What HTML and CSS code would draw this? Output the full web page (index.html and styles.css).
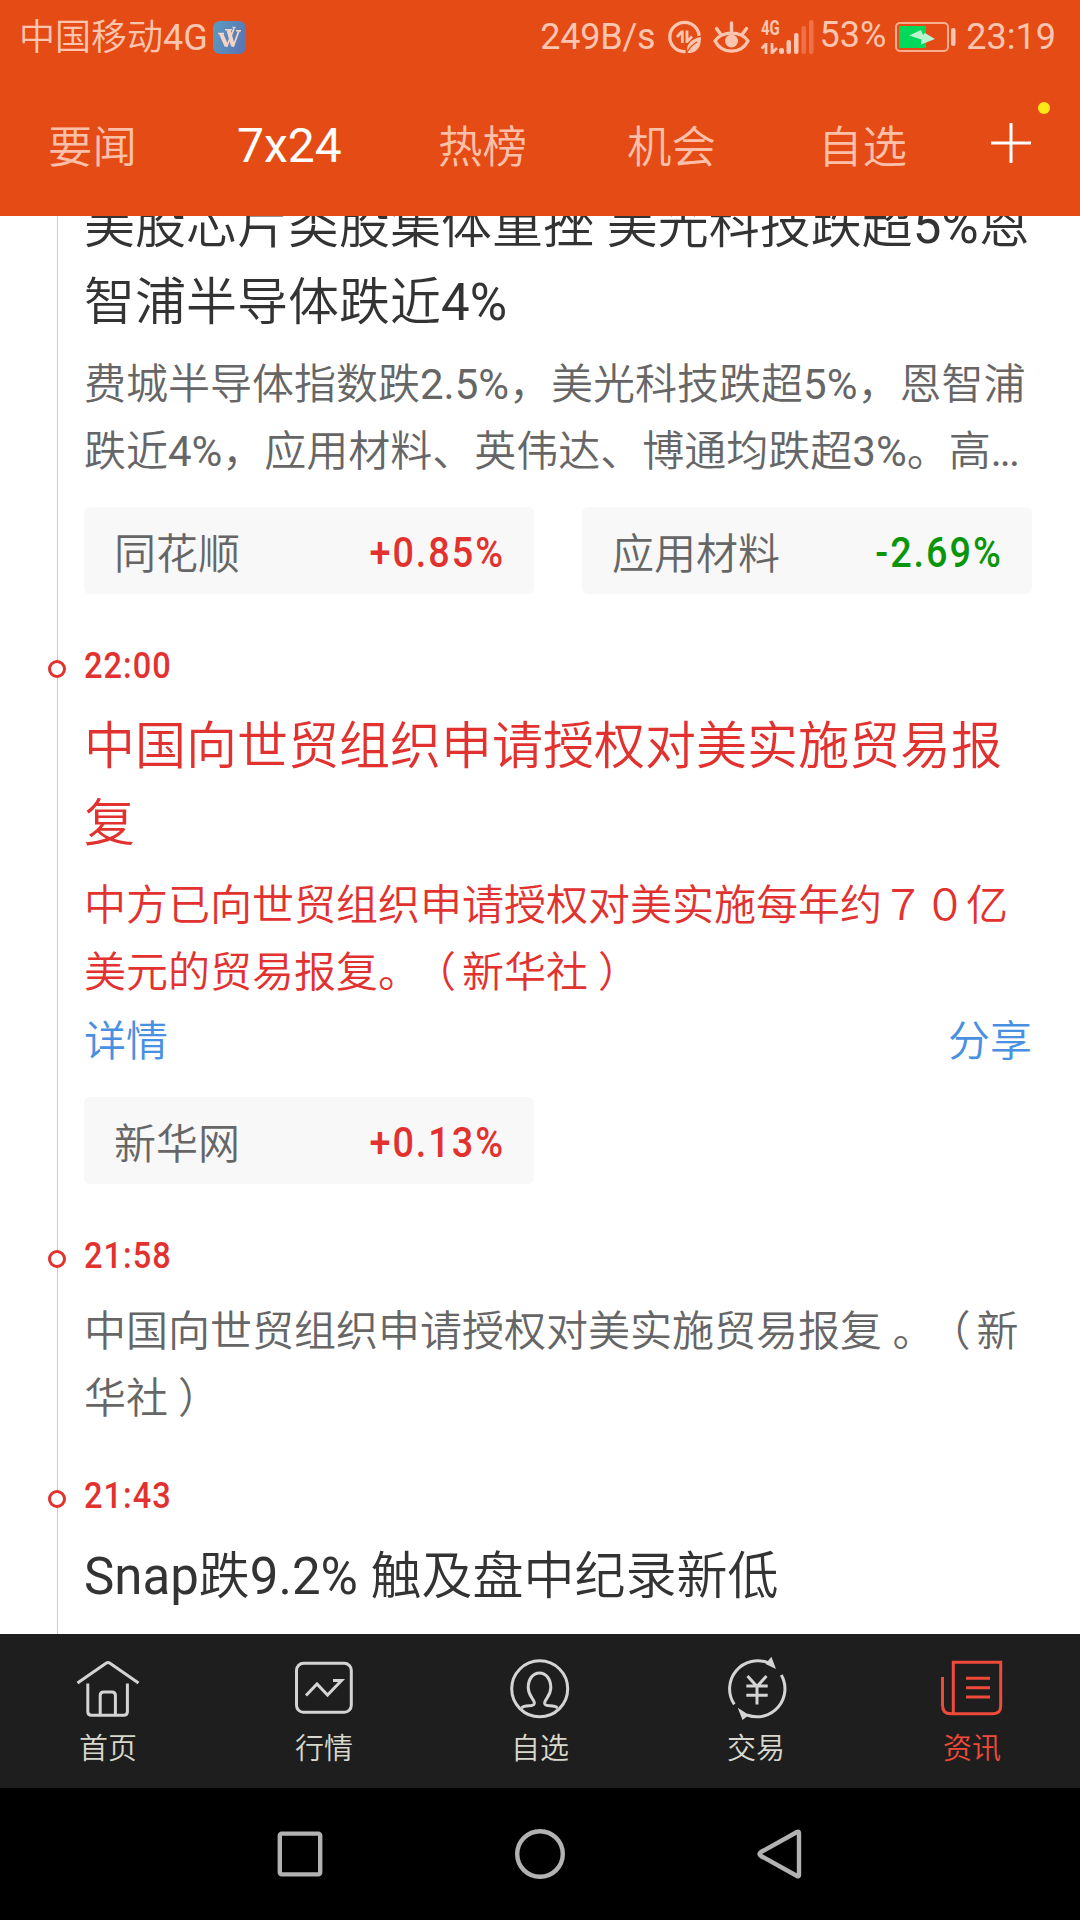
FILE: index.html
```html
<!DOCTYPE html>
<html lang="zh-CN">
<head>
<meta charset="utf-8">
<title>7x24</title>
<link rel="stylesheet" href="styles.css">
</head>
<body>
<div class="phone">
  <header class="header">
    <div class="status">
      <div class="status-left">
        <span class="carrier">中国移动4G</span>
        <svg class="app-badge" width="33" height="33" viewBox="0 0 33 33">
          <defs><linearGradient id="badge" x1="0" y1="0" x2="1" y2="0.3"><stop offset="0" stop-color="#5b9cc0"/><stop offset="1" stop-color="#5a78b4"/></linearGradient></defs>
          <rect width="33" height="33" rx="7" fill="url(#badge)"/>
          <g fill="none" stroke="#f4d3c8">
            <path d="M8 12.500L13.500 25M15.500 9L20 25" stroke-width="4"/>
            <path d="M13.500 26L21 7.500M20 26L26 9.500" stroke-width="1.800"/>
            <path d="M5 12.500h6M12 8.800h7M19.500 6.500h3M23 9.800h5" stroke-width="1.500"/>
          </g>
        </svg>
      </div>
      <div class="status-right">
        <span class="speed">249B/s</span>
        <svg class="ic-data" width="34" height="34" viewBox="0 0 34 34">
          <circle cx="16.500" cy="17" r="14.700" fill="none" stroke="#fcc5b0" stroke-width="3.300"/>
          <path d="M9 17l5-5.500M14.300 10.500V23M19 10.500V23M19 22l5-5.500" fill="none" stroke="#fcc5b0" stroke-width="2.800"/>
          <path d="M33.500 16c1 12-5 19-15 17.500C17 24 23 18 33.500 16z" fill="#fcc5b0" stroke="#e54b15" stroke-width="1.400"/>
          <path d="M18 34q4-8 11-12" fill="none" stroke="#e54b15" stroke-width="1.200"/>
        </svg>
        <svg class="ic-eye" width="37" height="34" viewBox="0 0 37 34">
          <path d="M2 21C9 10.500 28 10.500 35 21C28 34.500 9 34.500 2 21z" fill="none" stroke="#fcc5b0" stroke-width="3.200"/>
          <circle cx="18.500" cy="21" r="6.500" fill="#fcc5b0"/>
          <path d="M18.500 3v8M3.500 8.500l4 5.500M33.500 8.500l-4 5.500" stroke="#fcc5b0" stroke-width="3.400" stroke-linecap="round"/>
        </svg>
        <div class="signal">
          <span class="signal-type">4G</span>
          <svg width="54" height="34" viewBox="0 0 54 34">
            <g fill="#fcc5b0"><rect x="18" y="28" width="5" height="6" rx="2"/><rect x="25.500" y="20" width="4.500" height="14" rx="2"/><rect x="33" y="13" width="4.500" height="21" rx="2"/></g>
            <g fill="#ee7148"><rect x="40.500" y="6" width="4.500" height="28" rx="2"/><rect x="48" y="0" width="4.500" height="34" rx="2"/></g>
            <path d="M.5 28.500l4-4M5 23v11M11 23v11M11 33l5-5" fill="none" stroke="#fcc5b0" stroke-width="2.800"/>
          </svg>
        </div>
        <span class="percent">53%</span>
        <svg class="ic-battery" width="61" height="30" viewBox="0 0 61 30">
          <rect x="1" y="1" width="52" height="28" rx="4" fill="none" stroke="#fcae90" stroke-width="2"/>
          <rect x="4" y="4" width="27" height="22" fill="#00d959"/>
          <path d="M14 13.500L26 8l2 5 2-2 10 6-14 5.500.5-5z" fill="#b9f5d0"/>
          <rect x="56" y="6" width="4.500" height="18" rx="2" fill="#fcc5b0"/>
        </svg>
        <span class="clock">23:19</span>
      </div>
    </div>
    <nav class="tabs">
      <span class="tab">要闻</span>
      <span class="tab active">7x24</span>
      <span class="tab">热榜</span>
      <span class="tab">机会</span>
      <span class="tab">自选</span>
      <span class="add"><svg width="40" height="40" viewBox="0 0 40 40"><path d="M20 0v40M0 20h40" stroke="#fff" stroke-width="3"/></svg><i class="dot"></i></span>
    </nav>
  </header>

  <main class="feed">
    <article class="item first">
      <h2 class="title">美股芯片类股集体重挫 美光科技跌超5%恩<br>智浦半导体跌近4%</h2>
      <p class="text">费城半导体指数跌2.5%，美光科技跌超5%，恩智浦<br>跌近4%，应用材料、英伟达、博通均跌超3%。高<span class="more">...</span></p>
      <div class="chips">
        <div class="chip"><span>同花顺</span><b class="up">+0.85%</b></div>
        <div class="chip"><span>应用材料</span><b class="down">-2.69%</b></div>
      </div>
    </article>
    <article class="item red">
      <time class="time"><span>22:00</span></time>
      <h2 class="title">中国向世贸组织申请授权对美实施贸易报<br>复</h2>
      <p class="text">中方已向世贸组织申请授权对美实施每年约７０亿<br>美元的贸易报复。<span class="open">（</span>新华社<span class="close">）</span></p>
      <div class="links"><a>详情</a><a>分享</a></div>
      <div class="chips">
        <div class="chip"><span>新华网</span><b class="up">+0.13%</b></div>
      </div>
    </article>
    <article class="item">
      <time class="time"><span>21:58</span></time>
      <p class="text">中国向世贸组织申请授权对美实施贸易报复 。<span class="open">（</span>新<br>华社<span class="close">）</span></p>
    </article>
    <article class="item last">
      <time class="time"><span>21:43</span></time>
      <h2 class="title">Snap跌9.2% 触及盘中纪录新低</h2>
    </article>
  </main>

  <nav class="tabbar">
    <div class="tabbar-item">
      <svg width="72" height="72" viewBox="0 0 72 72"><path d="M5.500 31L34 11.200q2-1.200 4 0L66.500 31M15.800 31.500v28q0 3.800 3.800 3.800h32q3.800 0 3.800-3.800v-28M28.200 63V43.500q0-3.500 3.500-3.500h8.200q3.500 0 3.500 3.500V63"/></svg>
      <span>首页</span>
    </div>
    <div class="tabbar-item">
      <svg width="72" height="72" viewBox="0 0 72 72"><rect x="8.500" y="11.300" width="54.800" height="49" rx="7"/><path d="M18 43.500l11-11.500 10.500 11L53.500 28.500H45"/></svg>
      <span>行情</span>
    </div>
    <div class="tabbar-item">
      <svg width="72" height="72" viewBox="0 0 72 72"><circle cx="35.700" cy="36.800" r="28"/><path d="M17.500 56c4-4 12-.5 12.800-4.500C31 47 24.200 45 24.200 35.500c0-8 4.500-14.500 11.300-14.500s11.300 6.500 11.300 14.500C46.800 45 40 47 40.700 51.500c.8 4 8.800.5 12.800 4.500"/></svg>
      <span>自选</span>
    </div>
    <div class="tabbar-item">
      <svg width="72" height="72" viewBox="0 0 72 72"><path d="M14.300 52.300A28 28 0 0 1 49 11.200M61.300 23A28 28 0 0 1 27 63"/><path class="solid" d="M51.400 4.700L56 17l-10.500-5zM17.700 55.700L22.500 68l6.500-5z"/><path d="M27.500 24L37 34.500 46.500 24M37 34v18.500M26.300 34h21.400M26.300 43.300h21.400"/></svg>
      <span>交易</span>
    </div>
    <div class="tabbar-item current">
      <svg width="72" height="72" viewBox="0 0 72 72"><path d="M17.300 61.700V10.200h47.400V54q0 7.700-7.700 7.700H15q-8.500 0-8.500-8.500V25M30 26.300h24M30 35.700h24M30 45h24"/></svg>
      <span>资讯</span>
    </div>
  </nav>

  <div class="sysnav">
    <svg width="50" height="50" viewBox="0 0 50 50"><rect x="4.800" y="4.600" width="40.400" height="40.800" rx="2"/></svg>
    <svg width="50" height="50" viewBox="0 0 50 50"><circle cx="25" cy="25" r="22.800"/></svg>
    <svg width="50" height="50" viewBox="0 0 50 50"><path d="M44 4v42q0 2-2 1L6 27q-3-2 0-4L42 3q2-1 2 1z"/></svg>
  </div>
</div>
</body>
</html>
```
FILE: styles.css
```css
*, *::before { box-sizing: border-box; margin: 0; padding: 0; }

body {
  width: 1080px;
  height: 1920px;
  overflow: hidden;
  background: #fff;
  font-family: Roboto, "Noto Sans CJK SC DemiLight", "Noto Sans CJK SC", sans-serif;
  font-weight: 400;
  text-spacing-trim: space-all;
}

.phone { display: flex; flex-direction: column; height: 1920px; }

.header { height: 216px; background: #e54b15; flex: none; }

.status {
  display: flex;
  justify-content: space-between;
  height: 74px;
  padding: 0 24px 0 19px;
  color: #fcc5b0;
  font-size: 36px;
  line-height: 76px;
}
.status-left, .status-right { display: flex; align-items: center; }
.carrier { padding-top: 2px; }
.app-badge { margin-left: 5px; }
.speed { letter-spacing: -0.2px; }
.ic-data { margin-left: 12px; }
.ic-eye { margin-left: 11px; }
.signal { position: relative; display: flex; margin-left: 11px; }
.signal-type {
  position: absolute;
  left: 0;
  top: 0;
  font-size: 20px;
  font-weight: 700;
  line-height: 16px;
  transform: scaleX(0.75);
  transform-origin: 0 0;
}
.percent { margin-left: 5px; line-height: 70px; align-self: flex-start; }
.ic-battery { margin: 0 10px 0 9px; }

.tabs {
  display: grid;
  grid-template-columns: 189px 201px 189px 191px 173px 40px;
  align-items: center;
  height: 138px;
  padding-left: 48px;
  color: #fcc0aa;
  font-size: 44.5px;
}
.tab.active { padding-top: 5px; color: #fff; font-size: 48px; }
.add { position: relative; display: flex; }
.dot {
  position: absolute;
  right: -19px;
  top: -21px;
  width: 12px;
  height: 12px;
  border-radius: 50%;
  background: #ffe81a;
}

.feed {
  display: flex;
  flex-direction: column;
  flex: 1;
  min-height: 0;
  overflow: hidden;
  padding: 0 48px 0 57px;
  background: #fff;
}

.item { flex: none; padding: 0 0 0 26px; border-left: 1px solid #ccc; color: #666; }
.item.first { margin-top: -29px; }
.item.last { flex: 1; }
.title { color: #333; font-size: 51px; font-weight: 400; line-height: 77px; white-space: nowrap; }
.text { font-size: 42px; line-height: 67px; white-space: nowrap; }
.title + .text { padding-top: 10px; }
.red .title, .red .text { color: #e2322f; }
.more { letter-spacing: -2px; }
.open { margin: 0 6px 0 -6px; }
.close { margin: 0 -10px 0 10px; }

.time {
  position: relative;
  display: block;
  height: 42px;
  color: #e2322f;
  font-size: 37px;
  font-weight: 500;
  letter-spacing: 1.2px;
  line-height: 42px;
}
.time span { display: inline-block; transform: scaleX(0.88); transform-origin: 0 50%; }
.time::before {
  content: "";
  position: absolute;
  left: -36px;
  top: 15px;
  width: 18px;
  height: 18px;
  border: 3px solid #e2322f;
  border-radius: 50%;
  background: #fff;
}
.time + .title { padding-top: 21px; }
.time + .text { padding-top: 21px; }
.item > .text:last-child { padding-bottom: 43px; }

.chips { display: flex; gap: 48px; padding: 22px 0 51px; }
.chip {
  display: flex;
  justify-content: space-between;
  align-items: center;
  width: 450px;
  height: 87px;
  padding: 0 30px;
  border-radius: 6px;
  background: #f8f8f8;
  font-size: 42px;
}
.chip b {
  margin: 3px -1px 0 0;
  font-size: 43px;
  font-weight: 500;
  letter-spacing: 2.2px;
  transform: scaleX(0.88);
  transform-origin: 100% 50%;
}
.up { color: #e2322f; }
.down { color: #0a960a; }

.links {
  display: flex;
  justify-content: space-between;
  padding-top: 3px;
  color: #4a90e2;
  font-size: 42px;
  line-height: 66px;
}

.tabbar { display: grid; grid-template-columns: repeat(5, 1fr); flex: none; height: 154px; background: #1e1e1e; }
.tabbar-item {
  display: flex;
  flex-direction: column;
  align-items: center;
  padding-top: 18px;
  color: #d8d8cf;
  font-size: 29px;
  font-weight: 500;
  line-height: 50px;
}
.tabbar-item svg { flex: none; fill: none; stroke: #d4d4d4; stroke-width: 3; }
.tabbar-item .solid { fill: #d4d4d4; stroke: none; }
.tabbar-item.current { color: #f04a3a; }
.tabbar-item.current svg { stroke: #f04a3a; }

.sysnav { display: flex; justify-content: center; align-items: center; gap: 190px; flex: none; height: 132px; background: #000; }
.sysnav svg { fill: none; stroke: #b2b2b2; stroke-width: 4.4; }
```
